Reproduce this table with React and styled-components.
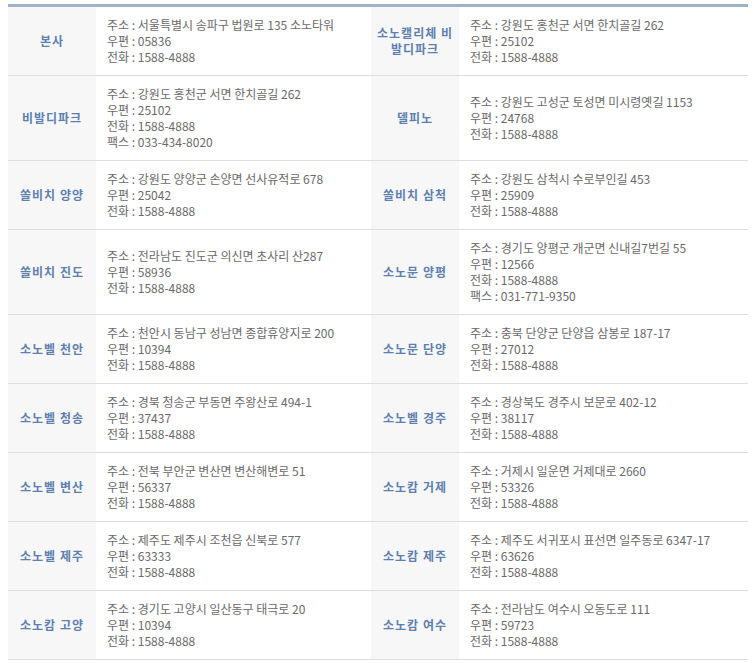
import React from "react";
import styled, { createGlobalStyle } from "styled-components";

const GlobalStyle = createGlobalStyle`
  body {
    margin: 4px 8px 0;
    background: #fff;
    font-family: "Noto Sans CJK KR", "Noto Sans", sans-serif;
  }
`;

// hotel list, two hotels per row
const hotels = [
  ["본사", "서울특별시 송파구 법원로 135 소노타워", "05836"],
  ["소노캘리체 비발디파크", "강원도 홍천군 서면 한치골길 262", "25102"],
  ["비발디파크", "강원도 홍천군 서면 한치골길 262", "25102", "033-434-8020"],
  ["델피노", "강원도 고성군 토성면 미시령옛길 1153", "24768"],
  ["쏠비치 양양", "강원도 양양군 손양면 선사유적로 678", "25042"],
  ["쏠비치 삼척", "강원도 삼척시 수로부인길 453", "25909"],
  ["쏠비치 진도", "전라남도 진도군 의신면 초사리 산287", "58936"],
  ["소노문 양평", "경기도 양평군 개군면 신내길7번길 55", "12566", "031-771-9350"],
  ["소노벨 천안", "천안시 동남구 성남면 종합휴양지로 200", "10394"],
  ["소노문 단양", "충북 단양군 단양읍 삼봉로 187-17", "27012"],
  ["소노벨 청송", "경북 청송군 부동면 주왕산로 494-1", "37437"],
  ["소노벨 경주", "경상북도 경주시 보문로 402-12", "38117"],
  ["소노벨 변산", "전북 부안군 변산면 변산해변로 51", "56337"],
  ["소노캄 거제", "거제시 일운면 거제대로 2660", "53326"],
  ["소노벨 제주", "제주도 제주시 조천읍 신북로 577", "63333"],
  ["소노캄 제주", "제주도 서귀포시 표선면 일주동로 6347-17", "63626"],
  ["소노캄 고양", "경기도 고양시 일산동구 태극로 20", "10394"],
  ["소노캄 여수", "전라남도 여수시 오동도로 111", "59723"],
];

const Table = styled.table`
  width: 740px;
  table-layout: fixed;
  border-collapse: collapse;
  border-top: 3px solid #a0b2c8;
`;

const Col = styled.col`
  width: ${(props) => (props.$wide ? "289px" : props.$label ? "88px" : "275px")};
`;

const Label = styled.th`
  background: #f7f7f7;
  color: #5d80b0;
  font-size: 12px;
  font-weight: bold;
  letter-spacing: 1px;
  line-height: 16px;
  padding: 10px 4px;
  text-align: center;
  vertical-align: middle;
  border-bottom: 1px solid #dedede;
  word-break: break-all;
`;

const Info = styled.td`
  color: #6a6a6a;
  font-size: 12px;
  line-height: 16px;
  padding: 10px 0 10px 11px;
  vertical-align: middle;
  border-bottom: 1px solid #dedede;
  white-space: nowrap;
`;

const Line = styled.div``;

function Hotel({ hotel }) {
  let [name, addr, zip, fax] = hotel;
  return (
    <>
      <Label>{name}</Label>
      <Info>
        <Line>주소 : {addr}</Line>
        <Line>우편 : {zip}</Line>
        <Line>전화 : 1588-4888</Line>
        {fax && <Line>팩스 : {fax}</Line>}
      </Info>
    </>
  );
}

export default function App() {
  let rows = [];
  for (let i = 0; i < hotels.length; i += 2) {
    rows.push([hotels[i], hotels[i + 1]]);
  }

  return (
    <>
      <GlobalStyle />
      <Table>
        <colgroup>
          <Col $label />
          <Col />
          <Col $label />
          <Col $wide />
        </colgroup>
        <tbody>
          {rows.map((pair, i) => (
            <tr key={i}>
              <Hotel hotel={pair[0]} />
              <Hotel hotel={pair[1]} />
            </tr>
          ))}
        </tbody>
      </Table>
    </>
  );
}
